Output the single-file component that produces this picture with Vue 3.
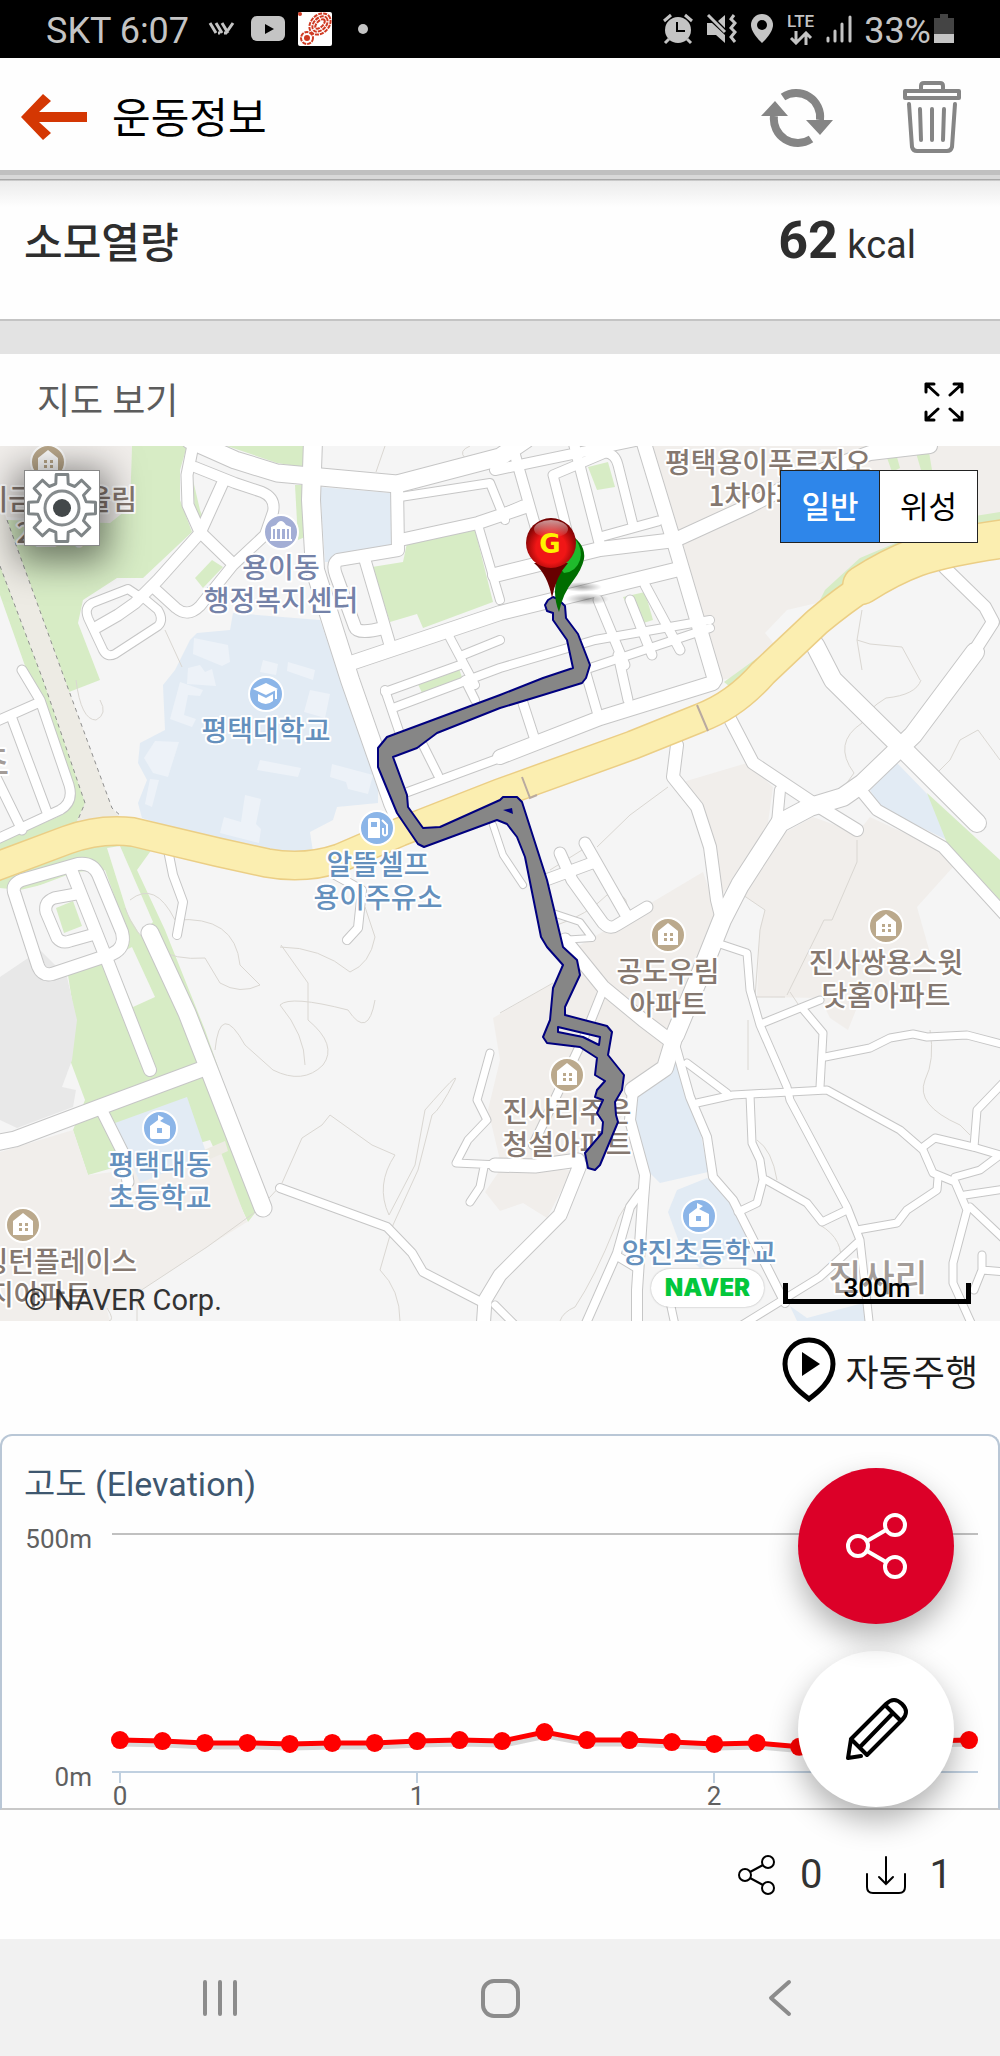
<template>
    <div class="screen">
        <div class="status-bar">
            <span class="status-text">SKT 6:07</span>
            <svg class="status-icon" width="28" height="14" viewBox="0 0 28 14" fill="none" stroke="#c4c4c4" stroke-width="3">
                <path d="M2 1 8 11M8 1l6 10M14 1l6 10M10 11h2M16 11h2l7-10" />
            </svg>
            <svg class="status-icon" width="36" height="26" viewBox="0 0 36 26">
                <rect x="1" width="34" height="25" rx="6" fill="#c4c4c4" />
                <path d="M15 8v10l9-5z" fill="#000" />
            </svg>
            <svg class="status-app" width="36" height="36" viewBox="0 0 36 36">
                <rect x="1" y="1" width="34" height="34" rx="2" fill="#fff" />
                <g fill="none" stroke="#cf3a22" stroke-width="2" stroke-dasharray="4 1">
                    <ellipse cx="23" cy="13" rx="12" ry="9" transform="rotate(-45 23 13)" />
                    <ellipse cx="23" cy="13" rx="9" ry="6" transform="rotate(-45 23 13)" />
                    <ellipse cx="23" cy="13" rx="6" ry="3" transform="rotate(-45 23 13)" />
                    <circle cx="10" cy="27" r="6" />
                </g>
                <circle cx="10" cy="27" r="3" fill="#cf3a22" />
                <circle cx="3" cy="3" r="2" fill="#cf3a22" />
            </svg>
            <span class="status-dot"></span>
            <span class="spacer"></span>
            <svg width="32" height="32" viewBox="0 0 32 32">
                <circle cx="16" cy="17" r="13" fill="#c4c4c4" />
                <path d="M2 8l7-6M30 8l-7-6M7 26l-4 4M25 26l4 4" stroke="#c4c4c4" stroke-width="3" />
                <path d="M15 9v9h8" fill="none" stroke="#000" stroke-width="2" />
            </svg>
            <svg width="32" height="32" viewBox="0 0 32 32">
                <path d="M2 10h5l13 12v8l-9-8H2zM13 8l7-6v13z" fill="#c4c4c4" />
                <path d="M3 2l17 17" stroke="#c4c4c4" stroke-width="3" />
                <path d="M29 2l-3 4 4 4-4 5 4 4-4 5 4 5" fill="none" stroke="#c4c4c4" stroke-width="3" />
            </svg>
            <svg width="28" height="32" viewBox="0 0 28 32">
                <path d="M14 1a11 11 0 0 0-11 11c0 8 11 18 11 18s11-10 11-18A11 11 0 0 0 14 1z" fill="#c4c4c4" />
                <circle cx="14" cy="12" r="5" fill="#000" />
            </svg>
            <div class="lte">
                <span>LTE</span>
                <svg width="24" height="14" viewBox="0 0 24 14" fill="none" stroke="#c4c4c4" stroke-width="3">
                    <path d="M7 0v11M2 7l5 5 5-5M17 14V3M12 7l5-5 5 5" />
                </svg>
            </div>
            <svg width="28" height="30" viewBox="0 0 28 30" stroke="#c4c4c4" stroke-width="3" stroke-linecap="round">
                <path d="M3 24v3M10 17v10M17 10v17M25 3v24" />
            </svg>
            <span class="status-text percent">33%</span>
            <svg width="20" height="30" viewBox="0 0 20 30">
                <path d="M6 0h8v4h6v16H0V4h6z" fill="#444" />
                <path d="M0 20h20v9H0z" fill="#c4c4c4" />
            </svg>
        </div>

        <header class="app-header">
            <button class="icon-button" type="button" aria-label="뒤로">
                <svg width="68" height="48" viewBox="0 0 68 48">
                    <path d="M1 24 23 1l8 7-12 11h48v10H19l12 11-8 7z" fill="#d43703" />
                </svg>
            </button>
            <h1 class="app-title">운동정보</h1>
            <button class="icon-button" type="button" aria-label="새로고침">
                <svg width="74" height="60" viewBox="0 0 74 60">
                    <g fill="none" stroke="#858585" stroke-width="8">
                        <path d="M23 10A24 24 0 0 1 60 33" />
                        <path d="M51 52A24 24 0 0 1 14 29" />
                    </g>
                    <path d="M46 33h27L60 48zM1 29h27L15 14z" fill="#858585" />
                </svg>
            </button>
            <button class="icon-button trash" type="button" aria-label="삭제">
                <svg width="60" height="74" viewBox="0 0 60 74" fill="none" stroke="#858585" stroke-width="4" stroke-linejoin="round" stroke-linecap="round">
                    <path d="M19 9V6q0-3 3-3h16q3 0 3 3v3M3 11h54v7H3zM7 24l3 43q1 4 5 4h30q4 0 5-4l3-43M18 29l1 31M30 29v31M42 29l-1 31" />
                </svg>
            </button>
        </header>

        <section class="calories">
            <h2 class="calories-label">소모열량</h2>
            <p class="calories-value"><strong>62</strong> kcal</p>
        </section>

        <section class="map-section">
            <div class="map-heading">
                <h2 class="map-title">지도 보기</h2>
                <button class="icon-button" type="button" aria-label="전체 화면">
                    <svg width="42" height="40" viewBox="0 0 42 40" fill="none" stroke="#000" stroke-width="3" stroke-linecap="round" stroke-linejoin="round">
                        <path d="M3 10V2h8M3 2l12 11M31 2h8v8M39 2 27 13M3 30v8h8M3 38l12-11M31 38h8v-8M39 38 27 27" />
                    </svg>
                </button>
            </div>

            <div class="map">
                <svg class="map-canvas" viewBox="0 446 1000 875" role="img" aria-label="운동 경로 지도">
                    <defs>
                        <radialGradient id="pin-red" cx="0.5" cy="0.6" r="0.6">
                            <stop offset="0.5" stop-color="#f01616" />
                            <stop offset="1" stop-color="#6b0000" />
                        </radialGradient>
                        <linearGradient id="pin-shine" x1="0" y1="0" x2="0" y2="1">
                            <stop offset="0" stop-color="#fff" stop-opacity="0.6" />
                            <stop offset="1" stop-color="#fff" stop-opacity="0" />
                        </linearGradient>
                        <radialGradient id="pin-shadow">
                            <stop offset="0" stop-opacity="0.35" />
                            <stop offset="1" stop-opacity="0" />
                        </radialGradient>
                    </defs>
                    <rect y="446" width="1000" height="875" fill="#f5f5f5" />

                    <polygon v-for="(area, i) in areas" :key="'area' + i" :points="area.points" :class="area.kind" />
                    <path v-for="(d, i) in contours" :key="'contour' + i" :d="d" class="contour" />
                    <path class="rail" d="M0 566 43 680 85 803 77 822M7 520 65 680 112 808 122 817" />

                    <path v-for="(road, i) in roads" :key="'casing' + i" :d="road.d" :stroke-width="road.w + 2" class="road road-casing" />
                    <path v-for="(road, i) in roads" :key="'road' + i" :d="road.d" :stroke-width="road.w" class="road" />
                    <path v-for="(part, i) in highway" :key="'highway-casing' + i" :d="part.d" :stroke-width="part.w + 3" class="highway-casing" />
                    <path v-for="(part, i) in highway" :key="'highway' + i" :d="part.d" :stroke-width="part.w" class="highway" />
                    <path class="crossing" d="M697 705 708 731M522 777 530 798 537 795" />

                    <g v-for="(place, i) in places" :key="'place' + i" :class="place.kind">
                        <g v-if="place.icon" :transform="`translate(${place.icon[0]} ${place.icon[1]})`">
                            <circle r="17" class="place-dot" />
                            <template v-if="place.shape === 'house'">
                                <path d="M-10 10V-4L0-12 10-4v14z" fill="#fff" />
                                <path d="M-4-2h3v3h-3zM2-2h3v3H2zM-4 3h3v3h-3zM2 3h3v3H2z" class="place-mark" />
                            </template>
                            <template v-else-if="place.shape === 'school'">
                                <path d="M-10 9v-11l8-6v-5l6 3-4 3v0l10 5v11q0 2-2 2H-8q-2 0-2-2z" fill="#fff" />
                                <path d="M-3 0h5v5h-5z" class="place-mark" />
                            </template>
                            <template v-else-if="place.shape === 'college'">
                                <path d="M-13-5 0-11 12-5 0 1zM-8 0l8 4 7-4v7q-7 6-15 0zM9-4h2V5H9z" fill="#fff" />
                            </template>
                            <template v-else-if="place.shape === 'fuel'">
                                <path d="M-9 10V-8q0-2 2-2H1q2 0 2 2v18zM-6-6v5h6v-5z" fill="#fff" fill-rule="evenodd" />
                                <path d="M5-8l5 5v9q-2 3-4 0V0" fill="none" stroke="#fff" stroke-width="2" />
                            </template>
                            <template v-else>
                                <path d="M-11 8h22M-9-4v11M-5-4v11M0-4v11M5-4v11M9-4v11" stroke="#fff" stroke-width="2" />
                                <path d="M-10-3v-2l5-2q5-8 10 0l5 2v2z" fill="#fff" />
                            </template>
                        </g>
                        <text
                            v-for="(line, j) in place.lines"
                            :key="j"
                            :x="place.ends ? place.ends[j] : place.x"
                            :y="place.y + j * 33"
                            :text-anchor="place.ends ? 'end' : 'middle'"
                            class="place-name"
                        >{{ line }}</text>
                    </g>

                    <path class="route" fill-rule="evenodd" :d="route" />
                    <path d="M503 810 512 808 513 814z" fill="#00007f" />

                    <ellipse cx="582" cy="587" rx="20" ry="5" fill="url(#pin-shadow)" />
                    <ellipse cx="587" cy="599" rx="22" ry="6" fill="url(#pin-shadow)" />
                    <path d="M571 535q15 10 13 24-2 10-11 22-10 12-14 31-8-20 0-42z" fill="#006d00" />
                    <path d="M576 540q7 10 4 20-4 12-16 13l-5-6z" fill="#1fbb2c" />
                    <path d="M534 563q14 12 18 35 4-22 16-35z" fill="#680000" />
                    <circle cx="551" cy="543" r="25" fill="url(#pin-red)" />
                    <ellipse cx="551" cy="529" rx="17" ry="9" fill="url(#pin-shine)" />
                    <text x="550" y="553" text-anchor="middle" class="pin-letter">G</text>
                </svg>

                <button class="map-settings" type="button" aria-label="지도 설정">
                    <svg width="72" height="72" viewBox="-36 -36 72 72">
                        <path :d="gear" fill="#fff" stroke="#7f8587" stroke-width="3" stroke-linejoin="round" />
                        <circle r="17" fill="#fff" stroke="#868b8d" stroke-width="3" />
                        <circle r="9" fill="#43484a" />
                    </svg>
                </button>
                <div class="map-types">
                    <button
                        v-for="type in mapTypes"
                        :key="type"
                        :class="{ active: type === mapType }"
                        :aria-pressed="type === mapType"
                        type="button"
                        @click="mapType = type"
                    >{{ type }}</button>
                </div>
                <span class="copyright">© NAVER Corp.</span>
                <div class="map-legend">
                    <a class="naver" href="#">NAVER</a>
                    <span class="scale">300m</span>
                </div>
            </div>
        </section>

        <div class="autoplay-row">
            <button class="autoplay" type="button">
                <svg width="54" height="66" viewBox="0 0 54 66">
                    <path d="M27 3C13 3 3 14 3 27c0 17 16 29 24 35 8-6 24-18 24-35C51 14 41 3 27 3z" fill="#fff" stroke="#000" stroke-width="5" />
                    <path d="M20 15v24l18-12z" />
                </svg>
                자동주행
            </button>
        </div>

        <section class="elevation">
            <h2 class="elevation-title">고도 (Elevation)</h2>
            <svg class="elevation-plot" viewBox="0 0 996 300" role="img" aria-label="고도 그래프">
                <path d="M110 26h866" stroke="#c0c0c0" stroke-width="2" />
                <path d="M110 264h866M118 264v11M415 264v11M712 264v11" fill="none" stroke="#c0d0e0" stroke-width="2" />
                <text x="90" y="40" text-anchor="end">500m</text>
                <text x="90" y="278" text-anchor="end">0m</text>
                <text v-for="km in [0, 1, 2]" :key="km" :x="118 + km * 297" y="297" text-anchor="middle">{{ km }}</text>
                <polyline :points="linePoints" class="line-shadow" />
                <polyline :points="linePoints" class="line" />
                <circle v-for="p in plotted" :key="p.x" :cx="p.x" :cy="p.y" r="9" fill="#f00" />
            </svg>
            <div class="fabs">
                <button class="fab fab-share" type="button" aria-label="공유">
                    <svg width="64" height="66" viewBox="0 0 64 66" fill="none" stroke="#fff" stroke-width="4">
                        <circle cx="14" cy="33" r="10" />
                        <circle cx="51" cy="12" r="10" />
                        <circle cx="51" cy="54" r="10" />
                        <path d="M23 28l19-11M23 38l19 11" />
                    </svg>
                </button>
                <button class="fab fab-edit" type="button" aria-label="편집">
                    <svg width="64" height="64" viewBox="0 0 64 64" fill="none" stroke="#000" stroke-width="4" stroke-linejoin="round" stroke-linecap="round">
                        <path d="M7 42 42 7q8-8 16 0t0 16L23 58zM41 8l16 16M16 50 49 16M7 42 4 61l13-2" />
                    </svg>
                </button>
            </div>
        </section>

        <footer class="counts">
            <button class="count" type="button" aria-label="공유 0">
                <svg width="40" height="42" viewBox="0 0 40 42" fill="none" stroke="#000" stroke-width="2">
                    <circle cx="8" cy="21" r="6" />
                    <circle cx="31" cy="8" r="6" />
                    <circle cx="31" cy="34" r="6" />
                    <path d="M13 18l13-7M13 24l13 7" />
                </svg>
                0
            </button>
            <button class="count" type="button" aria-label="다운로드 1">
                <svg width="42" height="42" viewBox="0 0 42 42" fill="none" stroke="#000" stroke-width="2" stroke-linecap="round">
                    <path d="M21 3v27M14 23l7 7 7-7M2 20v13q0 6 6 6h26q6 0 6-6V20" />
                </svg>
                1
            </button>
        </footer>

        <nav class="system-nav">
            <button class="icon-button" type="button" aria-label="최근 앱">
                <svg width="40" height="40" viewBox="0 0 40 40" stroke="#8c8c8c" stroke-width="4" stroke-linecap="round">
                    <path d="M5 4v32M20 4v32M35 4v32" />
                </svg>
            </button>
            <button class="icon-button" type="button" aria-label="홈">
                <svg width="40" height="40" viewBox="0 0 40 40" fill="none" stroke="#8c8c8c" stroke-width="4">
                    <rect x="3" y="3" width="35" height="35" rx="11" />
                </svg>
            </button>
            <button class="icon-button" type="button" aria-label="이전">
                <svg width="40" height="40" viewBox="0 0 40 40" fill="none" stroke="#8c8c8c" stroke-width="4" stroke-linecap="round" stroke-linejoin="round">
                    <path d="M29 4 11 20l18 16" />
                </svg>
            </button>
        </nav>
    </div>
</template>

<script setup>
import { computed, ref } from 'vue'

const mapTypes = ['일반', '위성']
const mapType = ref('일반')

// Elevation samples in metres, one every 1/7 km
const elevations = [67, 65, 61, 61, 59, 61, 61, 65, 67, 65, 84, 67, 67, 63, 59, 61, 53, 59, 63, 65, 67]

const plotted = computed(() => elevations.map((metres, i) => ({
    x: 118 + (i * 849) / 20,
    y: 264 - (metres * 238) / 500
})))

const linePoints = computed(() => plotted.value.map(p => `${p.x},${p.y}`).join(' '))

// Eight-tooth gear outline, centred on the origin
const gear = (() => {
    const points = []
    for (let i = 0; i < 8; i++) {
        const tooth = [[-0.25, 25], [-0.17, 34], [0.17, 34], [0.25, 25]]
        tooth.forEach(([offset, radius]) => {
            const angle = (i * Math.PI) / 4 + offset
            points.push(`${(radius * Math.sin(angle)).toFixed(1)} ${(-radius * Math.cos(angle)).toFixed(1)}`)
        })
    }
    return `M${points.join('L')}Z`
})()

const areas = [
    { kind: 'block', points: '0,446 132,446 130,507 110,523 7,517 0,485' },
    { kind: 'park', points: '132,446 187,446 180,470 180,500 192,532 143,578 117,578 83,600 78,623 100,680 69,692 7,520 110,523 130,507' },
    { kind: 'track', points: '0,500 7,520 65,680 112,808 122,820 75,825 85,803 43,680 0,566' },
    { kind: 'park', points: '0,566 43,680 85,803 75,825 0,855 0,842 62,815 74,795 30,680 0,595' },
    { kind: 'park', points: '227,446 305,446 303,467 277,463' },
    { kind: 'park', points: '295,485 302,485 305,537 298,540' },
    { kind: 'park', points: '195,578 212,560 223,567 203,588' },
    { kind: 'park', points: '193,480 200,510 204,520 195,515' },
    { kind: 'park', points: '207,534 233,557 232,562 210,540' },
    { kind: 'campus', points: '320,487 391,493 393,550 330,562 325,562' },
    { kind: 'park', points: '372,567 403,562 407,543 475,530 493,602 423,628 417,614 390,622' },
    { kind: 'park', points: '588,467 608,462 615,487 597,490' },
    { kind: 'park', points: '623,597 645,592 653,620 637,625' },
    { kind: 'park', points: '417,682 457,663 463,680 423,695' },
    { kind: 'campus', points: '197,633 230,630 233,613 320,620 335,663 343,680 378,785 378,803 337,807 333,820 310,832 313,852 270,850 210,840 142,818 138,803 147,780 138,763 140,743 165,730 163,685 175,670 190,640' },
    { kind: 'building', points: '194,638 228,645 230,662 222,666 193,654' },
    { kind: 'building', points: '188,668 200,665 205,672 212,669 216,686 187,684' },
    { kind: 'building', points: '180,682 203,690 200,696 188,695 184,715 196,719 192,727 170,719' },
    { kind: 'building', points: '263,660 278,664 276,675 260,672' },
    { kind: 'building', points: '288,662 315,670 313,680 287,671' },
    { kind: 'building', points: '310,690 330,694 325,718 304,712' },
    { kind: 'building', points: '260,760 301,768 298,777 257,770' },
    { kind: 'building', points: '332,764 373,775 368,794 348,789 346,782 330,777' },
    { kind: 'building', points: '245,795 261,799 256,824 261,829 259,843 220,833 224,817 241,822' },
    { kind: 'building', points: '144,758 155,741 179,742 168,777 153,773' },
    { kind: 'building', points: '150,779 159,780 152,807 145,804' },
    { kind: 'block', points: '653,446 1000,446 1000,518 970,523 915,540 860,568 817,603 787,610 765,633 775,645 735,677 722,680 677,547' },
    { kind: 'park', points: '1000,512 950,520 860,558 825,590 817,606 870,575 940,540 1000,530' },
    { kind: 'park', points: '775,645 724,682 740,695 790,645' },
    { kind: 'park', points: '885,452 895,450 900,468 892,472' },
    { kind: 'park', points: '914,446 928,446 932,470 921,470' },
    { kind: 'park', points: '0,860 60,845 155,845 137,870 165,930 205,1030 265,1200 248,1222 210,1140 88,1175 73,1130 85,1100 70,1060 75,1020 68,975 110,960 130,940 105,870 20,890 0,888' },
    { kind: 'ground', points: '107,848 120,846 153,922 140,935 128,915' },
    { kind: 'ground', points: '112,957 132,947 155,997 133,1007' },
    { kind: 'ground', points: '22,892 75,872 100,870 125,940 110,958 50,970' },
    { kind: 'park', points: '56,908 73,901 82,926 64,933' },
    { kind: 'grey', points: '0,977 40,950 67,977 77,1020 72,1060 62,1087 76,1090 73,1107 17,1128 0,1120' },
    { kind: 'block', points: '0,1152 73,1130 88,1175 130,1170 220,1150 247,1222 207,1247 137,1293 107,1310 110,1321 0,1321' },
    { kind: 'campus', points: '115,1123 187,1097 207,1155 140,1183' },
    { kind: 'track', points: '204,1150 225,1141 228,1151 208,1160' },
    { kind: 'block', points: '683,782 747,763 773,787 767,830 722,895 713,870 707,825' },
    { kind: 'block', points: '577,947 703,872 717,913 700,957 672,1042 640,1018' },
    { kind: 'block', points: '493,1018 553,983 580,960 670,1045 655,1075 632,1090 628,1110 580,1160 500,1160 488,1110 500,1060' },
    { kind: 'block', points: '500,1170 572,1170 547,1218 523,1203 500,1211 485,1192' },
    { kind: 'block', points: '740,893 777,837 813,817 857,833 870,817 947,853 953,867 917,907 930,953 930,990 860,1000 848,1030 830,1018 820,998 757,997 760,927 765,910' },
    { kind: 'campus', points: '897,763 930,797 947,840 880,807 870,790' },
    { kind: 'park', points: '927,793 1000,860 1000,900 947,843' },
    { kind: 'campus', points: '675,1050 687,1087 700,1130 708,1172 660,1183 650,1173 635,1123 637,1097 663,1073' },
    { kind: 'campus', points: '707,1178 727,1193 753,1250 700,1268 683,1253 668,1212 677,1190' },
    { kind: 'campus', points: '790,1306 807,1318 863,1303 867,1321 797,1321' }
]

const contours = [
    'M385 446 376 472M470 446q-12 5-5 12l35 2M165 630l17 37M76 680q5 40 20 40 12-6 4-20',
    'M862 670 857 640 870 644 902 647 920 680M857 640 862 610',
    'M921 680q-5 15-35 18-20 12-24 25-30 20-8 50l-10 14M935 775l15-15 10-20 18-10 22 30',
    'M130 900q25-20 45 20 60-5 65 45l20 20q-20 10-40-2l-15-25q-60 5-80-50',
    'M305 1065q0-30-25-60 10-10 68 5 20 30 27-10M280 947q40 0 70 25 20-8 25-35l-10-30',
    'M215 1050q5-50 30-5l28 25q30 15 50-5 15-20-15-45v-37l-27-38',
    'M282 1183 302 1138 322 1125 330 1115 372 1145 395 1155Q375 1185 389 1215L415 1165 425 1110Q460 1070 455 1080 440 1110 432 1115L418 1170 393 1225 380 1270Q400 1290 400 1321',
    'M137 1293 207 1247 258 1210 282 1184M137 1293V1321M107 1308q8 12 2 13',
    'M597 847 630 815 668 787M550 870 590 845M557 925q30-10 50-30 30-5 15 30',
    'M930 1030q5 30-5 50-10 25 35 45l10 10M748 1020v50M757 1140q15 10 20 40M500 1013 553 983',
    'M857 840v22l-25 58h-8L787 995M740 893l25 17-5 20-5 67h30M790 992l20 30',
    'M645 1187q-25 20-30 40-20 50-40 80-12 5-15 14M820 1225q25 15 20 40'
]

const highway = [
    { w: 27, d: 'M917 557Q867 580 817 622L763 673Q735 705 700 718L633 745 500 793 400 832 340 858Q305 870 267 863L217 852 133 832Q100 828 67 840L-5 867' },
    { w: 37, d: 'M1010 538Q950 546 917 557 890 567 862 585' }
]

const roads = [
    { w: 17, d: 'M190 440 235 460 277 473 397 484 500 457 525 440' },
    { w: 18, d: 'M313 440 311 500 315 570 350 680 393 803 405 830' },
    { w: 6, d: 'M493 825 503 855 523 885' },
    { w: 11, d: 'M193 445 187 475 188 505 200 532 232 563' },
    { w: 11, d: 'M224 480 200 533 158 580 135 603 118 615 97 627' },
    { w: 10, d: 'M195 467 235 483 262 492Q276 498 273 512L265 535 233 565 200 606Q188 618 176 608L154 588' },
    { w: 8, d: 'M137 595 128 589 92 603Q84 608 88 618L103 650Q107 658 115 654L158 626Q164 620 158 610L140 595' },
    { w: 12, d: 'M397 485 398 550 338 560Q332 564 336 575L355 627Q358 635 383 628' },
    { w: 11, d: 'M365 560 390 645' },
    { w: 8, d: 'M400 497 490 483 505 520' },
    { w: 12, d: 'M400 540 478 523 525 507' },
    { w: 8, d: 'M478 525 500 600' },
    { w: 14, d: 'M345 665 500 613 675 570' },
    { w: 14, d: 'M495 575 600 549 675 540 747 507 810 475 870 453 930 446' },
    { w: 8, d: 'M393 708 500 668 595 640 710 620' },
    { w: 8, d: 'M450 638 475 685M463 655 500 640' },
    { w: 8, d: 'M385 690 402 740M385 692 460 665M465 680 475 700' },
    { w: 8, d: 'M423 745 438 775M405 793 500 758' },
    { w: 14, d: 'M500 757 600 718 713 683' },
    { w: 9, d: 'M522 700 535 740M585 670 598 715M618 655 628 700M598 600 625 665M630 600 652 655M645 585 680 650' },
    { w: 8, d: 'M590 668 710 628' },
    { w: 14, d: 'M643 440 675 545 715 680' },
    { w: 10, d: 'M573 440 600 545M515 455 545 560M495 470 640 440' },
    { w: 9, d: 'M553 475 572 550M553 475 605 453Q615 453 618 465L633 525M600 537 658 521M500 515 523 505' },
    { w: 12, d: 'M945 568 985 607 993 622 975 650 957 680' },
    { w: 18, d: 'M975 652 913 735 863 783 843 797 810 807 780 823 740 885 722 920 700 975 675 1035' },
    { w: 16, d: 'M675 1035 665 1068 633 1090' },
    { w: 10, d: 'M633 1090 630 1120 645 1175 643 1200 637 1290 637 1330' },
    { w: 8, d: 'M673 1037 690 1097 707 1137 713 1177 733 1200 785 1303' },
    { w: 18, d: 'M815 645 833 680 897 743 977 823' },
    { w: 12, d: 'M728 715 753 763 813 803 857 830' },
    { w: 10, d: 'M780 790 777 823' },
    { w: 11, d: 'M863 793 877 810 943 847 1005 915' },
    { w: 12, d: 'M677 745 673 777 697 807 710 847 717 900 722 920' },
    { w: 7, d: 'M717 943 747 953 750 990 760 1025 787 1087 790 1100 847 1207 860 1240 870 1330' },
    { w: 7, d: 'M763 1023 820 1000M802 1008 823 1033 820 1087' },
    { w: 7, d: 'M697 1103 733 1095 827 1090 900 1130 923 1150 933 1173 955 1182 967 1210 953 1263 953 1283 972 1325' },
    { w: 7, d: 'M825 1057 870 1048 890 1038 913 1034 927 1037 967 1035 1005 1045' },
    { w: 7, d: 'M687 1063 727 1093M750 1095 752 1143 760 1160 763 1180 757 1203 738 1212' },
    { w: 7, d: 'M766 1180 807 1203 822 1222 847 1210M857 1230 897 1223 907 1210 937 1190 938 1178' },
    { w: 7, d: 'M923 1147 935 1138 973 1147 1000 1155 980 1170 955 1177' },
    { w: 7, d: 'M974 1147 977 1110 1003 1083M965 1195 1005 1189M970 1207 1005 1240M982 1255 982 1270 1005 1272M982 1270 974 1290' },
    { w: 7, d: 'M857 1243 820 1277 742 1325M670 1302 675 1325M495 1305 515 1325' },
    { w: 13, d: 'M495 1165 535 1166 578 1160M580 1165 560 1215 500 1275 485 1300 483 1330' },
    { w: 8, d: 'M640 1193 630 1207 617 1253 583 1330M617 1256 637 1268' },
    { w: 13, d: 'M565 940 603 987 643 1020 672 1042' },
    { w: 8, d: 'M603 990 585 1035 545 1120 533 1145' },
    { w: 11, d: 'M560 853 572 880 590 905 603 923Q610 930 617 925L647 907M585 843 625 913M546 880 592 863' },
    { w: 6, d: 'M553 913 580 922 592 938 560 940' },
    { w: 8, d: 'M280 1188 387 1227 412 1253 423 1272 485 1304' },
    { w: 7, d: 'M490 1053 477 1100 487 1120 468 1140 456 1163 500 1165M484 1167 480 1187 470 1202' },
    { w: 8, d: 'M168 850 173 875 183 902 177 935M335 875 362 890 358 928 347 940' },
    { w: 9, d: 'M22 670 40 700 69 785Q74 802 60 810L-5 840M-5 722 40 702M11 716 48 815M-5 775 22 830' },
    { w: 12, d: 'M14 892Q12 884 22 880L78 864Q92 862 98 874L122 932Q126 948 112 954L52 974Q42 976 38 966Z' },
    { w: 12, d: 'M72 872 105 955 150 1070' },
    { w: 11, d: 'M76 894 54 898Q44 902 46 912L57 938Q62 944 70 941L95 934' },
    { w: 17, d: 'M150 933 187 1013 263 1208' },
    { w: 15, d: 'M-5 1143 15 1139 100 1107 205 1068' },
    { w: 11, d: 'M103 1113 123 1153 128 1182' }
]

const route = 'M548 600 553 597 558 599 565 606 566 618 578 634 590 665 586 678 582 683 543 695 500 708 437 733 417 748 393 757 407 795 408 807 423 828 440 827 500 800'
    + ' 503 797 517 797 522 802 547 880 563 947 577 960 580 975 565 1007 565 1015 607 1026 612 1032 608 1055 624 1075 622 1090 615 1102 616 1115 618 1122 600 1165 595 1170 588 1168'
    + ' 585 1153 602 1133 603 1122 597 1113 603 1100 595 1097 597 1090 605 1081 595 1075 597 1058 580 1047 547 1043 543 1037 550 1020 553 988 563 965 547 947 541 937'
    + ' 525 857 517 837 507 824 497 820 424 847 418 844 397 813 378 767 378 748 387 737 500 695 543 678 573 668 567 640 553 620 553 613 547 611 545 605Z'
    + 'M558 1027 600 1037 599 1045 583 1037 558 1032Z'

const places = [
    { kind: 'home', shape: 'house', icon: [48, 462], ends: [137, 84], y: 510, lines: ['용이금호어울림', '2단지'] },
    { kind: 'civic', shape: 'hall', icon: [281, 532], x: 281, y: 578, lines: ['용이동', '행정복지센터'] },
    { kind: 'edu', shape: 'college', icon: [266, 694], x: 266, y: 741, lines: ['평택대학교'] },
    { kind: 'edu', shape: 'fuel', icon: [377, 828], x: 378, y: 875, lines: ['알뜰셀프', '용이주유소'] },
    { kind: 'home', x: 768, y: 473, lines: ['평택용이푸르지오', '1차아파트'] },
    { kind: 'home', shape: 'house', icon: [668, 935], x: 668, y: 982, lines: ['공도우림', '아파트'] },
    { kind: 'home', shape: 'house', icon: [886, 926], x: 886, y: 973, lines: ['진사쌍용스윗', '닷홈아파트'] },
    { kind: 'home', shape: 'house', icon: [567, 1075], x: 567, y: 1122, lines: ['진사리주은', '청설아파트'] },
    { kind: 'edu', shape: 'school', icon: [160, 1128], x: 160, y: 1175, lines: ['평택대동', '초등학교'] },
    { kind: 'edu', shape: 'school', icon: [699, 1216], x: 699, y: 1263, lines: ['양진초등학교'] },
    { kind: 'home', shape: 'house', icon: [23, 1225], ends: [137, 91], y: 1272, lines: ['링턴플레이스', '지아파트'] },
    { kind: 'village', x: 878, y: 1291, lines: ['진사리'] },
    { kind: 'village', ends: [9], y: 775, lines: ['초'] }
]
</script>

<style>
body {
    background: #fefefe;
}
</style>

<style scoped>
.screen {
    font-family: Roboto, "Noto Sans CJK KR", sans-serif;
    color: #000;
    background: #fefefe;
}

h1,
h2,
p {
    margin: 0;
    font-weight: 400;
}

button {
    font: inherit;
    color: inherit;
    margin: 0;
    padding: 0;
    border: 0;
    background: none;
    cursor: pointer;
}

svg {
    display: block;
    flex-shrink: 0;
}

.icon-button {
    display: flex;
    align-items: center;
    justify-content: center;
}

.spacer {
    flex: 1;
}

/* Status bar */
.status-bar {
    display: flex;
    align-items: center;
    gap: 11px;
    height: 58px;
    padding: 0 46px;
    background: #000;
    color: #c4c4c4;
}

.status-text {
    font-size: 36px;
    line-height: 58px;
    padding-top: 4px;
}

.status-icon {
    margin-left: 3px;
}

.status-icon:first-of-type {
    margin-left: 8px;
}

.status-dot {
    width: 10px;
    height: 10px;
    margin-left: 14px;
    border-radius: 50%;
    background: #c4c4c4;
}

.lte {
    display: flex;
    flex-direction: column;
    align-items: center;
    gap: 2px;
    font-size: 17px;
    font-weight: 500;
    line-height: 16px;
}

.percent {
    margin-right: -8px;
}

/* Title bar */
.app-header {
    display: flex;
    align-items: center;
    height: 106px;
    padding: 6px 38px 0 20px;
    border-bottom: 5px solid #c0c0c0;
}

.app-title {
    flex: 1;
    margin-left: 24px;
    padding-top: 4px;
    font-size: 42px;
    line-height: 60px;
}

.trash {
    margin-left: 68px;
}

/* Calories */
.calories {
    display: flex;
    align-items: baseline;
    justify-content: space-between;
    box-sizing: border-box;
    height: 144px;
    padding: 32px 84px 0 24px;
    border-top: 4px solid #d8d8d8;
    background: linear-gradient(#a8a8a8 0 1px, #ebebeb 2px, #fefefe 28px);
    color: #2e2e2e;
}

.calories-label {
    font-size: 42px;
    font-weight: 500;
    line-height: 60px;
}

.calories-value {
    font-size: 38px;
    line-height: 60px;
}

.calories-value strong {
    font-size: 52px;
    font-weight: 700;
}

/* Map */
.map-section {
    border-top: 2px solid #c4c4c4;
}

.map-heading {
    display: flex;
    align-items: center;
    justify-content: space-between;
    height: 88px;
    padding: 4px 35px 0 37px;
    border-top: 33px solid #e3e3e3;
}

.map-title {
    font-size: 36px;
    line-height: 48px;
    color: #5c5c5c;
}

.map {
    position: relative;
    overflow: hidden;
}

.map-canvas {
    width: 100%;
    height: auto;
}

.park { fill: #d7ecc5; }
.block { fill: #f1eeeb; }
.track { fill: #edebe4; }
.campus { fill: #e2ebf4; }
.building { fill: #edf2f8; }
.grey { fill: #e8e8e8; }
.ground { fill: #f5f5f5; }

.contour {
    fill: none;
    stroke: #dad7d2;
    stroke-width: 1;
}

.rail {
    fill: none;
    stroke: #8f8f8f;
    stroke-width: 1;
    stroke-dasharray: 4 4;
}

.road {
    fill: none;
    stroke: #fff;
    stroke-linejoin: round;
    stroke-linecap: round;
}

.road-casing {
    stroke: #c6c6c6;
}

.highway,
.highway-casing {
    fill: none;
    stroke: #fbeeb0;
    stroke-linecap: round;
}

.highway-casing {
    stroke: #ebce85;
}

.crossing {
    fill: none;
    stroke: #b9aaa0;
    stroke-width: 2;
}

.place-name {
    font-family: "Noto Sans CJK KR", sans-serif;
    font-size: 28px;
    font-weight: 500;
    paint-order: stroke;
    stroke: #fff;
    stroke-width: 4px;
    stroke-linejoin: round;
}

.place-dot {
    stroke: #fff;
    stroke-width: 2;
}

.home .place-name { fill: #857870; }
.home .place-dot,
.home .place-mark { fill: #bba98c; }
.edu .place-name { fill: #6490bd; }
.edu .place-dot,
.edu .place-mark { fill: #8bb5e8; }
.civic .place-name { fill: #7482a8; }
.civic .place-dot { fill: #a3aed5; }

.village .place-name {
    fill: #a39c98;
    font-size: 36px;
}

.route {
    fill: #868686;
    stroke: #00007f;
    stroke-width: 2;
    stroke-linejoin: round;
}

.pin-letter {
    font-family: "DejaVu Sans", sans-serif;
    font-size: 26px;
    font-weight: 700;
    fill: #fff200;
}

.map-settings {
    position: absolute;
    top: 24px;
    left: 24px;
    padding: 1px;
    border: 1px solid #888;
    background: #fff;
    box-shadow: 0 8px 36px 8px rgba(0, 0, 0, 0.5);
}

.map-types {
    position: absolute;
    top: 24px;
    right: 22px;
    display: flex;
    border: 1px solid #222;
    background: #fff;
    font-size: 31px;
}

.map-types button {
    width: 98px;
    height: 71px;
    line-height: 73px;
}

.map-types button + button {
    border-left: 1px solid #222;
}

.map-types .active {
    background: #2e86ea;
    color: #fff;
    font-weight: 500;
}

.copyright {
    position: absolute;
    left: 24px;
    bottom: 5px;
    font-size: 29px;
    line-height: 32px;
    color: #333;
}

.map-legend {
    position: absolute;
    right: 29px;
    bottom: 14px;
    display: flex;
    align-items: center;
    gap: 19px;
}

.naver {
    width: 113px;
    height: 38px;
    border-radius: 19px;
    background: #fff;
    box-shadow: 0 0 2px rgba(0, 0, 0, 0.3);
    color: #03c73c;
    font-family: Inter, sans-serif;
    font-size: 24px;
    font-weight: 900;
    line-height: 38px;
    text-align: center;
    text-decoration: none;
}

.scale {
    position: relative;
    width: 188px;
    font-size: 26px;
    font-weight: 500;
    line-height: 20px;
    text-align: center;
}

.scale::after {
    content: "";
    position: absolute;
    inset: auto 0 -6px;
    height: 16px;
    border: 5px solid #000;
    border-top: 0;
}

/* Auto play */
.autoplay-row {
    display: flex;
    justify-content: flex-end;
    padding: 16px 22px 31px;
}

.autoplay {
    display: flex;
    align-items: center;
    gap: 10px;
    font-size: 36px;
    color: #1c1c1c;
}

/* Elevation */
.elevation {
    position: relative;
    padding-top: 24px;
    border: 2px solid #b9c7d6;
    border-bottom-color: #c8c8c8;
    border-radius: 12px 12px 0 0;
}

.elevation-title {
    padding: 0 22px;
    font-size: 34px;
    line-height: 48px;
    color: #3e576f;
}

.elevation-plot {
    width: 100%;
    height: auto;
}

.elevation-plot text {
    font-size: 26px;
    fill: #606060;
}

.line,
.line-shadow {
    fill: none;
    stroke: #f00;
    stroke-width: 5;
}

.line-shadow {
    stroke: rgba(0, 0, 0, 0.15);
    transform: translate(2px, 4px);
}

.fabs {
    position: absolute;
    top: 32px;
    right: 44px;
    display: flex;
    flex-direction: column;
    gap: 27px;
}

.fab {
    display: flex;
    align-items: center;
    justify-content: center;
    width: 156px;
    height: 156px;
    border-radius: 50%;
    background: #fff;
    box-shadow: 0 14px 30px rgba(0, 0, 0, 0.3);
}

.fab-share {
    position: relative;
    z-index: 1;
    background: #dc0028;
}

/* Counts */
.counts {
    display: flex;
    align-items: center;
    justify-content: flex-end;
    gap: 42px;
    height: 129px;
    padding-right: 48px;
}

.count {
    display: flex;
    align-items: center;
    gap: 23px;
    font-size: 40px;
    color: #333;
}

/* Android navigation */
.system-nav {
    display: flex;
    justify-content: space-around;
    align-items: center;
    height: 117px;
    padding: 0 80px;
    background: #f1f1f1;
}
</style>
